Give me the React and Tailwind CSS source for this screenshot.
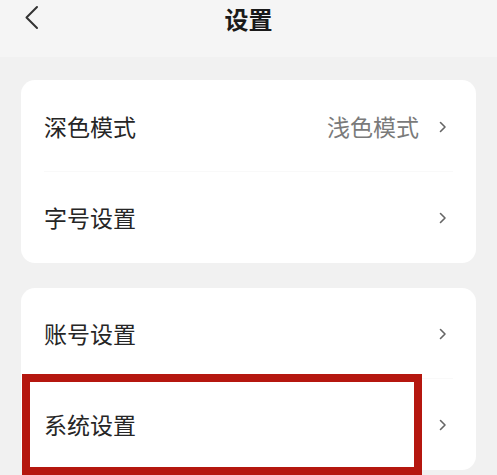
import React from 'react';

const Chevron = () => (
  <svg width="8" height="12" viewBox="0 0 8 12" fill="none" className="shrink-0">
    <path d="M1.5 1.5 L6 6 L1.5 10.5" stroke="#666" strokeWidth="1.6" strokeLinecap="round" strokeLinejoin="round" />
  </svg>
);

const Row = ({ label, value, divider }) => (
  <div className="relative flex items-center h-[91px] pl-[23px] pr-[29px]">
    <span className="flex-1 text-[23px] text-[#262626]">{label}</span>
    {value && <span className="text-[23px] text-[#7a7a7a] mr-[20px]">{value}</span>}
    <Chevron />
    {divider && <div className="absolute bottom-0 left-[23px] right-[23px] h-px bg-[#f9f9f9]"></div>}
  </div>
);

const App = () => {
  return (
    <div className="w-[497px] h-[475px] overflow-hidden bg-[#f1f1f1]" style={{ fontFamily: '"Noto Sans CJK SC", "Noto Sans", sans-serif' }}>
      <header className="relative h-[57px] bg-[#f5f5f5] flex items-center justify-center">
        <svg width="16" height="26" viewBox="0 0 16 26" fill="none" className="absolute left-[24px] top-[5px]">
          <path d="M13 2 L2.5 12.5 L13 23" stroke="#333" strokeWidth="2" strokeLinecap="round" strokeLinejoin="round" />
        </svg>
        <h1 className="text-[24px] font-bold text-[#1a1a1a] -mt-[20px] leading-none">设置</h1>
      </header>

      <main className="px-[21px] pt-[23px] flex flex-col gap-[25px]">
        <section className="bg-white rounded-[14px] pt-[1px]">
          <Row label="深色模式" value="浅色模式" divider />
          <Row label="字号设置" />
        </section>

        <section className="relative bg-white rounded-[14px]">
          <Row label="账号设置" divider />
          <Row label="系统设置" />
          <div className="absolute left-[1px] top-[86px] w-[400px] h-[101px] border-[8px] border-[#b5170f]"></div>
        </section>
      </main>
    </div>
  );
};

export default App;
